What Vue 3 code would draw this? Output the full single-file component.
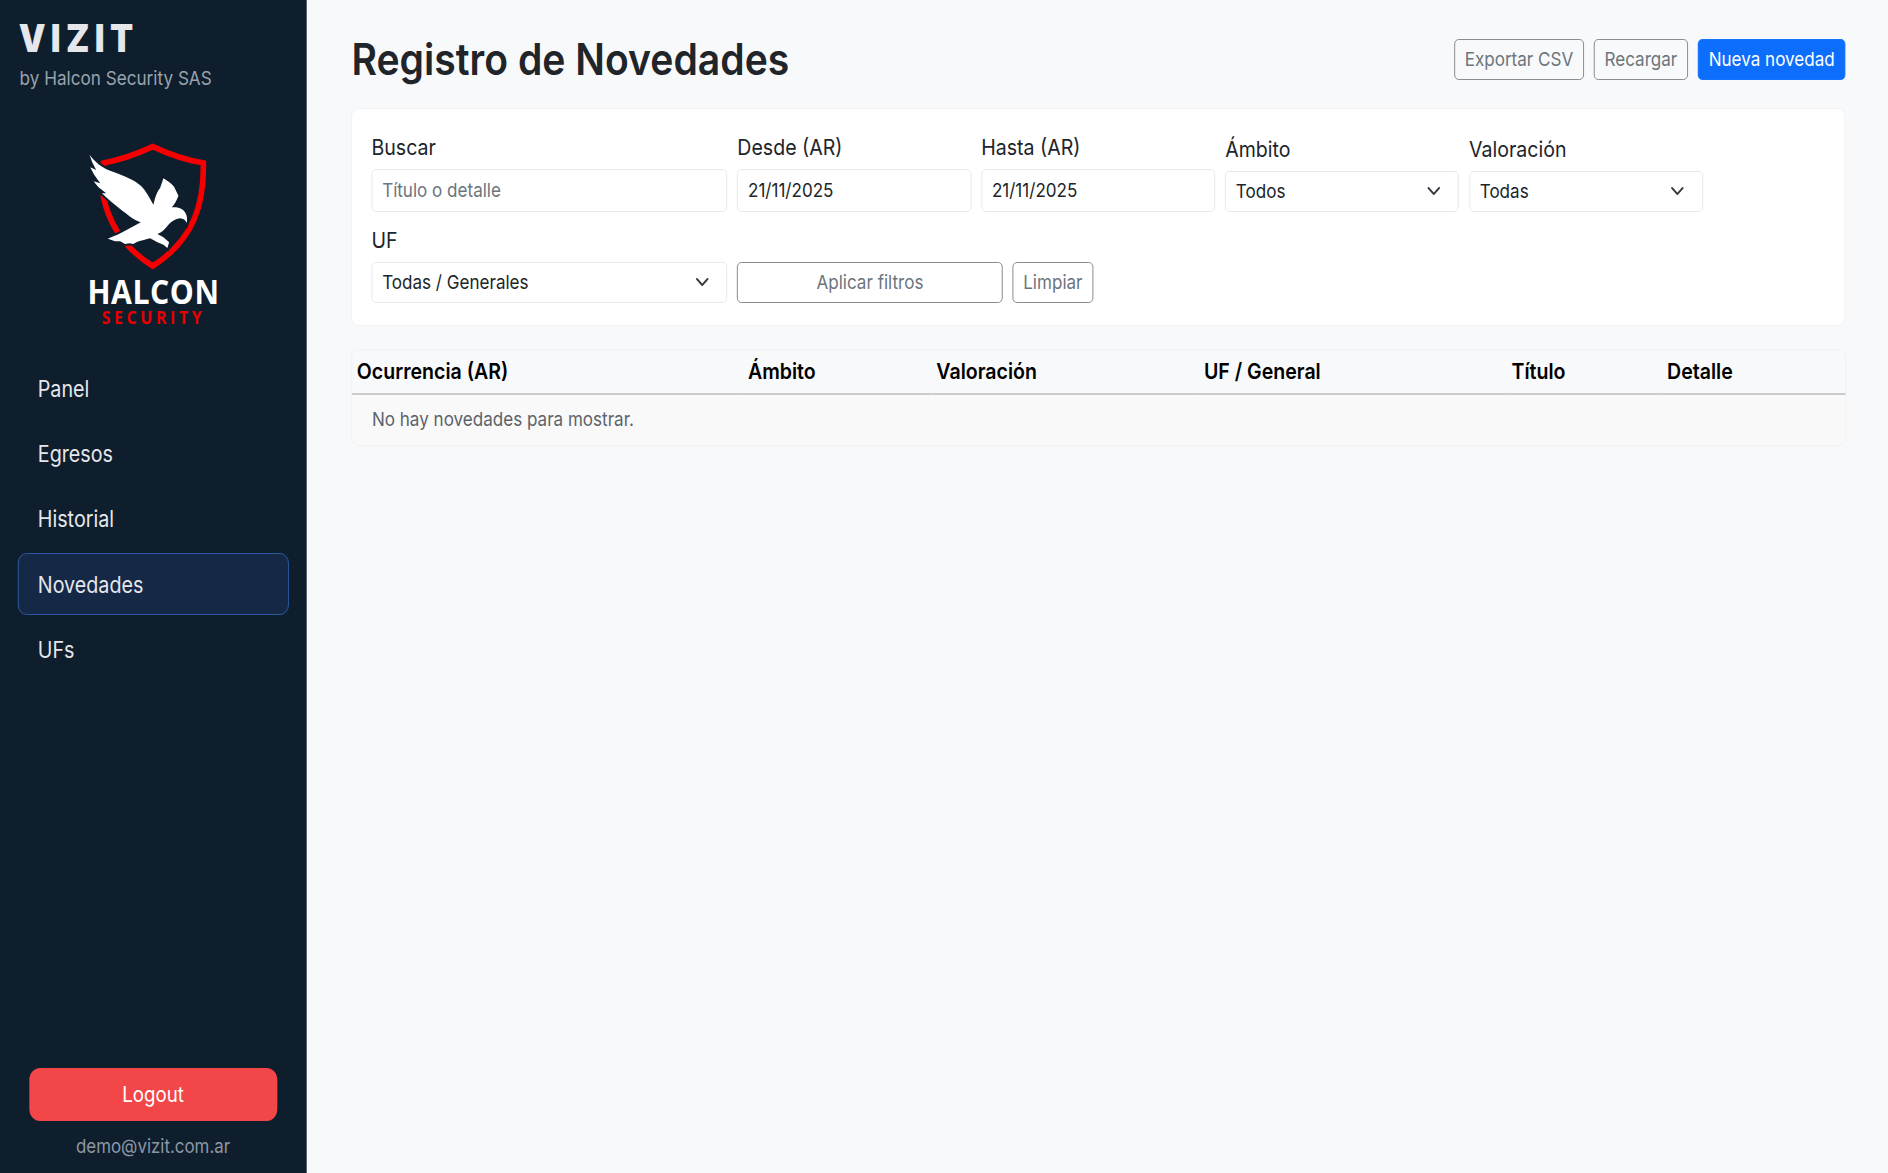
<template>
  <div class="page">
    <aside class="sidebar">
      <div class="brand">
        <div class="brand-name">VIZIT</div>
        <div class="brand-sub">by Halcon Security SAS</div>
      </div>
      <div class="logo">
        <svg class="logo-mark" viewBox="0 0 510 420" preserveAspectRatio="none">
          <path class="shield" d="M248 38C295 60 345 78 400 87C402 205 375 315 248 396C170 348 120 280 100 190L100 87C150 78 200 60 248 38Z" />
          <path class="eagle-gap" :d="eaglePath" />
          <path class="eagle" :d="eaglePath" />
        </svg>
        <div class="logo-title">HALCON</div>
        <div class="logo-sub">SECURITY</div>
      </div>
      <nav class="nav">
        <a v-for="item in navItems" :key="item" class="nav-item" :class="{ active: item === 'Novedades' }">{{ item }}</a>
      </nav>
      <div class="side-foot">
        <button class="logout">Logout</button>
        <div class="email">demo@vizit.com.ar</div>
      </div>
    </aside>

    <main class="main">
      <header class="head">
        <h1>Registro de Novedades</h1>
        <div class="actions">
          <button class="btn">Exportar CSV</button>
          <button class="btn">Recargar</button>
          <button class="btn primary">Nueva novedad</button>
        </div>
      </header>

      <section class="filters">
        <div class="field span3">
          <label>Buscar</label>
          <input class="control tall" placeholder="Título o detalle" />
        </div>
        <div class="field span2">
          <label>Desde (AR)</label>
          <input class="control tall" value="21/11/2025" />
        </div>
        <div class="field span2">
          <label>Hasta (AR)</label>
          <input class="control tall" value="21/11/2025" />
        </div>
        <div v-for="f in selects" :key="f.label" class="field span2">
          <label>{{ f.label }}</label>
          <div class="select-wrap">
            <select class="control"><option>{{ f.value }}</option></select>
            <svg class="chevron" viewBox="0 0 16 16"><path d="M2 5l6 6 6-6" /></svg>
          </div>
        </div>
        <div class="field span3">
          <label>UF</label>
          <div class="select-wrap">
            <select class="control"><option>Todas / Generales</option></select>
            <svg class="chevron" viewBox="0 0 16 16"><path d="M2 5l6 6 6-6" /></svg>
          </div>
        </div>
        <div class="span3 filter-btns">
          <button class="btn grow">Aplicar filtros</button>
          <button class="btn">Limpiar</button>
        </div>
      </section>

      <table class="table">
        <thead>
          <tr>
            <th v-for="c in columns" :key="c.label" :style="{ width: c.width + 'px' }">{{ c.label }}</th>
          </tr>
        </thead>
        <tbody>
          <tr>
            <td colspan="6">No hay novedades para mostrar.</td>
          </tr>
        </tbody>
      </table>
    </main>
  </div>
</template>

<script setup>
const navItems = ['Panel', 'Egresos', 'Historial', 'Novedades', 'UFs']

const selects = [
  { label: 'Ámbito', value: 'Todos' },
  { label: 'Valoración', value: 'Todas' }
]

// widths are in the layout's px, the page is squeezed horizontally afterwards
const columns = [
  { label: 'Ocurrencia (AR)', width: 440 },
  { label: 'Ámbito', width: 212 },
  { label: 'Valoración', width: 301 },
  { label: 'UF / General', width: 346 },
  { label: 'Título', width: 175 },
  { label: 'Detalle', width: 206 }
]

const eaglePath =
  'M58 62C75 85 95 100 120 110C160 125 190 135 212 155C228 170 240 195 250 212C255 190 262 170 270 162L280 133C292 140 305 150 312 158L325 185C320 200 312 212 305 220C320 218 338 222 345 235C352 245 352 258 350 267C346 258 340 254 330 253C315 255 305 262 295 272C285 285 275 295 262 300L280 310L297 325L292 342L280 332L262 325L240 313C225 318 205 320 190 330L178 328L165 330L150 322L135 322L113 314C135 305 150 298 165 290L212 265C190 258 170 240 150 225L125 205L108 190L95 178L108 178L85 160L70 142L90 148L72 122L60 100L78 108L66 85Z'
</script>

<style>
html,
body {
  margin: 0;
  overflow: hidden;
  background: #f8f9fa;
}
</style>

<style scoped>
.page {
  width: 2124px;
  height: 1173px;
  display: flex;
  transform: scaleX(0.8889);
  transform-origin: 0 0;
  font-family: Inter, "Noto Sans", sans-serif;
  font-size: 19.2px;
  color: #212529;
  background: #f8f9fa;
}

/* sidebar */
.sidebar {
  width: 345.4px;
  flex: none;
  display: flex;
  flex-direction: column;
  background: #0f1e2d;
  color: #e5e7eb;
}

.brand {
  padding: 16px 0 0 21px;
}

.brand-name {
  font-family: Inter, sans-serif;
  font-size: 38px;
  line-height: 44px;
  font-weight: 900;
  letter-spacing: 6px;
  color: #e5e7eb;
}

.brand-sub {
  font-family: Inter, sans-serif;
  font-size: 19.3px;
  line-height: 24px;
  margin-top: 6px;
  margin-left: 1px;
  color: #9aa3ad;
}

.logo {
  margin-top: 44px;
  display: flex;
  flex-direction: column;
  align-items: center;
}

.logo-mark {
  width: 191px;
  height: 140px;
  display: block;
  margin-left: 3px;
}

.shield {
  fill: none;
  stroke: #f50000;
  stroke-width: 17;
}

.eagle-gap {
  fill: #0f1e2d;
  stroke: #0f1e2d;
  stroke-width: 12;
}

.eagle {
  fill: #fff;
}

.logo-title {
  font-family: "Open Sans", sans-serif;
  font-size: 34px;
  line-height: 32px;
  font-weight: 700;
  letter-spacing: 0.6px;
  color: #fff;
  margin-top: 0.5px;
}

.logo-sub {
  font-family: "Open Sans", sans-serif;
  font-size: 18px;
  line-height: 20px;
  font-weight: 700;
  letter-spacing: 4px;
  color: #e60000;
  margin-top: 0.5px;
}

.nav {
  margin-top: 30.2px;
  padding: 0 20.5px 0 19.5px;
  display: flex;
  flex-direction: column;
  gap: 3.3px;
}

.nav-item {
  display: flex;
  align-items: center;
  height: 62px;
  box-sizing: border-box;
  padding-left: 22px;
  font-size: 22.2px;
  border: 1px solid transparent;
  border-radius: 10px;
  color: #e5e7eb;
}

.nav-item.active {
  background: #152947;
  border-color: #2a5ca8;
}

.side-foot {
  margin-top: auto;
  padding: 0 33.5px 13px 32.5px;
  text-align: center;
}

.logout {
  width: 100%;
  height: 53px;
  border: none;
  border-radius: 12px;
  background: #f24648;
  color: #fff;
  font: inherit;
  font-size: 21px;
}

.email {
  margin-top: 13px;
  line-height: 26px;
  font-size: 19px;
  color: #8d97a3;
}

/* main */
.main {
  flex: 1;
  min-width: 0;
  box-sizing: border-box;
  padding: 39px 48px 0 50px;
}

.head {
  display: flex;
  align-items: center;
  justify-content: space-between;
  height: 41px;
  margin-bottom: 28px;
}

h1 {
  margin: 0;
  font-size: 44px;
  font-weight: 600;
  line-height: 41px;
  color: #212529;
}

.actions {
  display: flex;
  gap: 11.25px;
}

.btn {
  height: 41px;
  box-sizing: border-box;
  padding: 0 11px 2px;
  border: 1px solid #80868c;
  border-radius: 5px;
  background: transparent;
  color: #6c757d;
  font: inherit;
  white-space: nowrap;
}

.btn.primary {
  background: #0d6efd;
  border-color: #0d6efd;
  color: #fff;
}

.btn.grow {
  flex: 1;
}

.filters {
  display: grid;
  grid-template-columns: repeat(12, 1fr);
  column-gap: 11.25px;
  row-gap: 14.5px;
  align-items: end;
  padding: 24.5px 22px 22px 21.5px;
  background: #fff;
  border: 1px solid #f0f1f3;
  border-radius: 8px;
  box-sizing: border-box;
  height: 218px;
}

.field label {
  display: block;
  height: 27px;
  line-height: 27px;
  margin-bottom: 8.5px;
  font-size: 22px;
}

.span3 {
  grid-column: span 3;
}

.span2 {
  grid-column: span 2;
}

.control {
  display: block;
  width: 100%;
  height: 41px;
  box-sizing: border-box;
  padding: 0 11px 2px;
  border: 1px solid #e6e8eb;
  border-radius: 5px;
  background: #fff;
  color: #212529;
  font: inherit;
  appearance: none;
  outline: none;
}

.control.tall {
  height: 43px;
}

.control::placeholder {
  color: #6c757d;
}

.select-wrap {
  position: relative;
}

.chevron {
  position: absolute;
  right: 20.5px;
  top: 12px;
  width: 16px;
  height: 16px;
  pointer-events: none;
}

.chevron path {
  fill: none;
  stroke: #343a40;
  stroke-width: 2;
  stroke-linecap: round;
  stroke-linejoin: round;
}

.filter-btns {
  display: flex;
  gap: 11.25px;
}

.table {
  width: 100%;
  margin-top: 23px;
  border-collapse: separate;
  border-spacing: 0;
  table-layout: fixed;
  border: 1px solid #f0f1f3;
  border-radius: 8px;
}

.table th {
  height: 45px;
  padding: 0 0 2px 5px;
  box-sizing: border-box;
  text-align: left;
  font-size: 22px;
  font-weight: 600;
  color: #000;
  border-bottom: 2px solid #c9cccf;
}

.table td {
  height: 50px;
  padding: 0 0 2px 22px;
  box-sizing: border-box;
  color: #5c636a;
  background: #f9f9f9;
  border-radius: 0 0 8px 8px;
}
</style>
